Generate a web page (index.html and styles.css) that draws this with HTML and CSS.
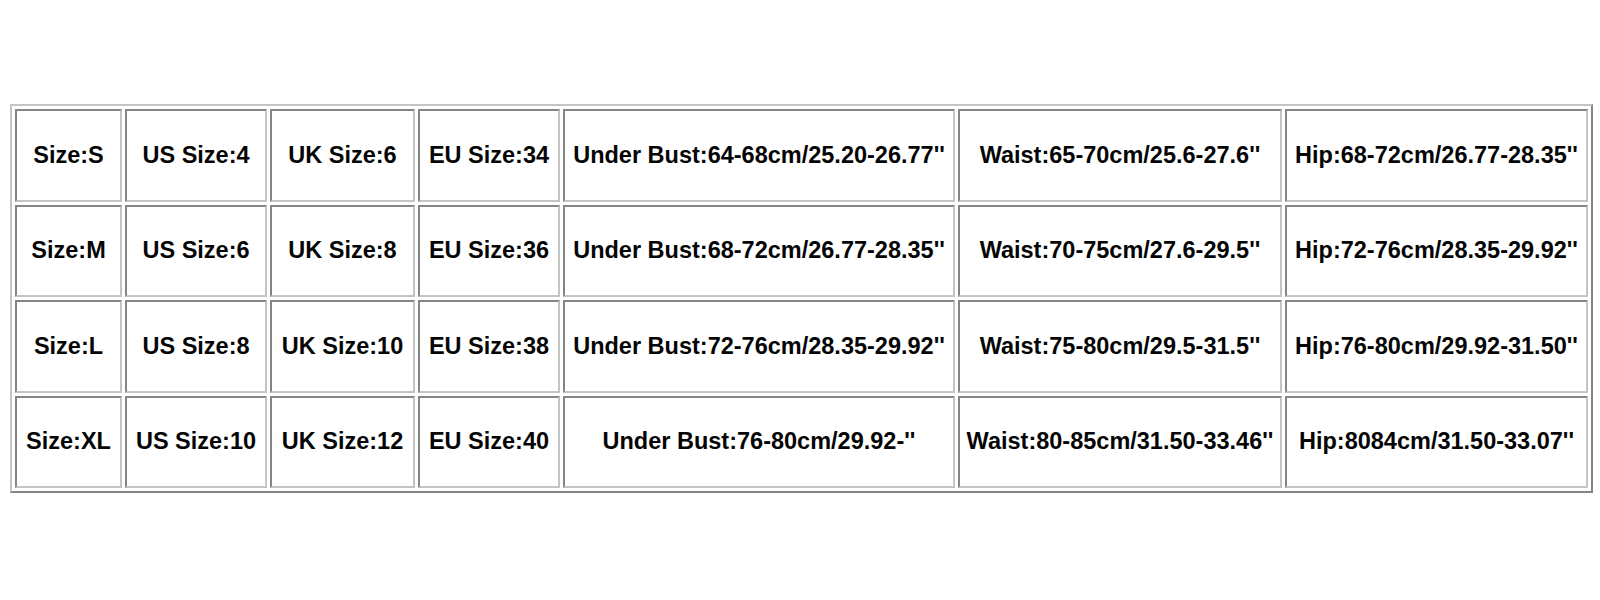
FILE: index.html
```html
<!DOCTYPE html>
<html>
<head>
<meta charset="utf-8">
<link rel="stylesheet" href="styles.css">
</head>
<body>
<table class="size-table">
  <colgroup>
    <col class="c1"><col class="c2"><col class="c3"><col class="c4"><col class="c5"><col class="c6"><col class="c7">
  </colgroup>
  <tr>
    <td>Size:S</td><td>US Size:4</td><td>UK Size:6</td><td>EU Size:34</td>
    <td>Under Bust:64-68cm/25.20-26.77''</td><td>Waist:65-70cm/25.6-27.6''</td><td>Hip:68-72cm/26.77-28.35''</td>
  </tr>
  <tr>
    <td>Size:M</td><td>US Size:6</td><td>UK Size:8</td><td>EU Size:36</td>
    <td>Under Bust:68-72cm/26.77-28.35''</td><td>Waist:70-75cm/27.6-29.5''</td><td>Hip:72-76cm/28.35-29.92''</td>
  </tr>
  <tr>
    <td>Size:L</td><td>US Size:8</td><td>UK Size:10</td><td>EU Size:38</td>
    <td>Under Bust:72-76cm/28.35-29.92''</td><td>Waist:75-80cm/29.5-31.5''</td><td>Hip:76-80cm/29.92-31.50''</td>
  </tr>
  <tr>
    <td>Size:XL</td><td>US Size:10</td><td>UK Size:12</td><td>EU Size:40</td>
    <td>Under Bust:76-80cm/29.92-''</td><td>Waist:80-85cm/31.50-33.46''</td><td>Hip:8084cm/31.50-33.07''</td>
  </tr>
</table>
</body>
</html>
```
FILE: styles.css
```css
html, body {
  margin: 0;
  padding: 0;
  background: #ffffff;
}
body {
  padding: 104px 0 0 10px;
  font-family: "Liberation Sans", Arial, sans-serif;
}
.size-table {
  table-layout: fixed;
  width: 1583px;
  border-collapse: separate;
  border-spacing: 3px;
  border-style: solid;
  border-width: 2px;
  border-color: #c4c4c4 #858585 #858585 #c4c4c4;
}
.c1 { width: 107px; }
.c2 { width: 142px; }
.c3 { width: 145px; }
.c4 { width: 142px; }
.c5 { width: 392px; }
.c6 { width: 324px; }
.c7 { width: 303px; }
.size-table td {
  box-sizing: border-box;
  height: 92.5px;
  padding: 0;
  border-style: solid;
  border-width: 2px;
  border-color: #858585 #c4c4c4 #c4c4c4 #858585;
  text-align: center;
  vertical-align: middle;
  font-weight: bold;
  font-size: 23.5px;
  color: #050505;
  white-space: nowrap;
}
```
